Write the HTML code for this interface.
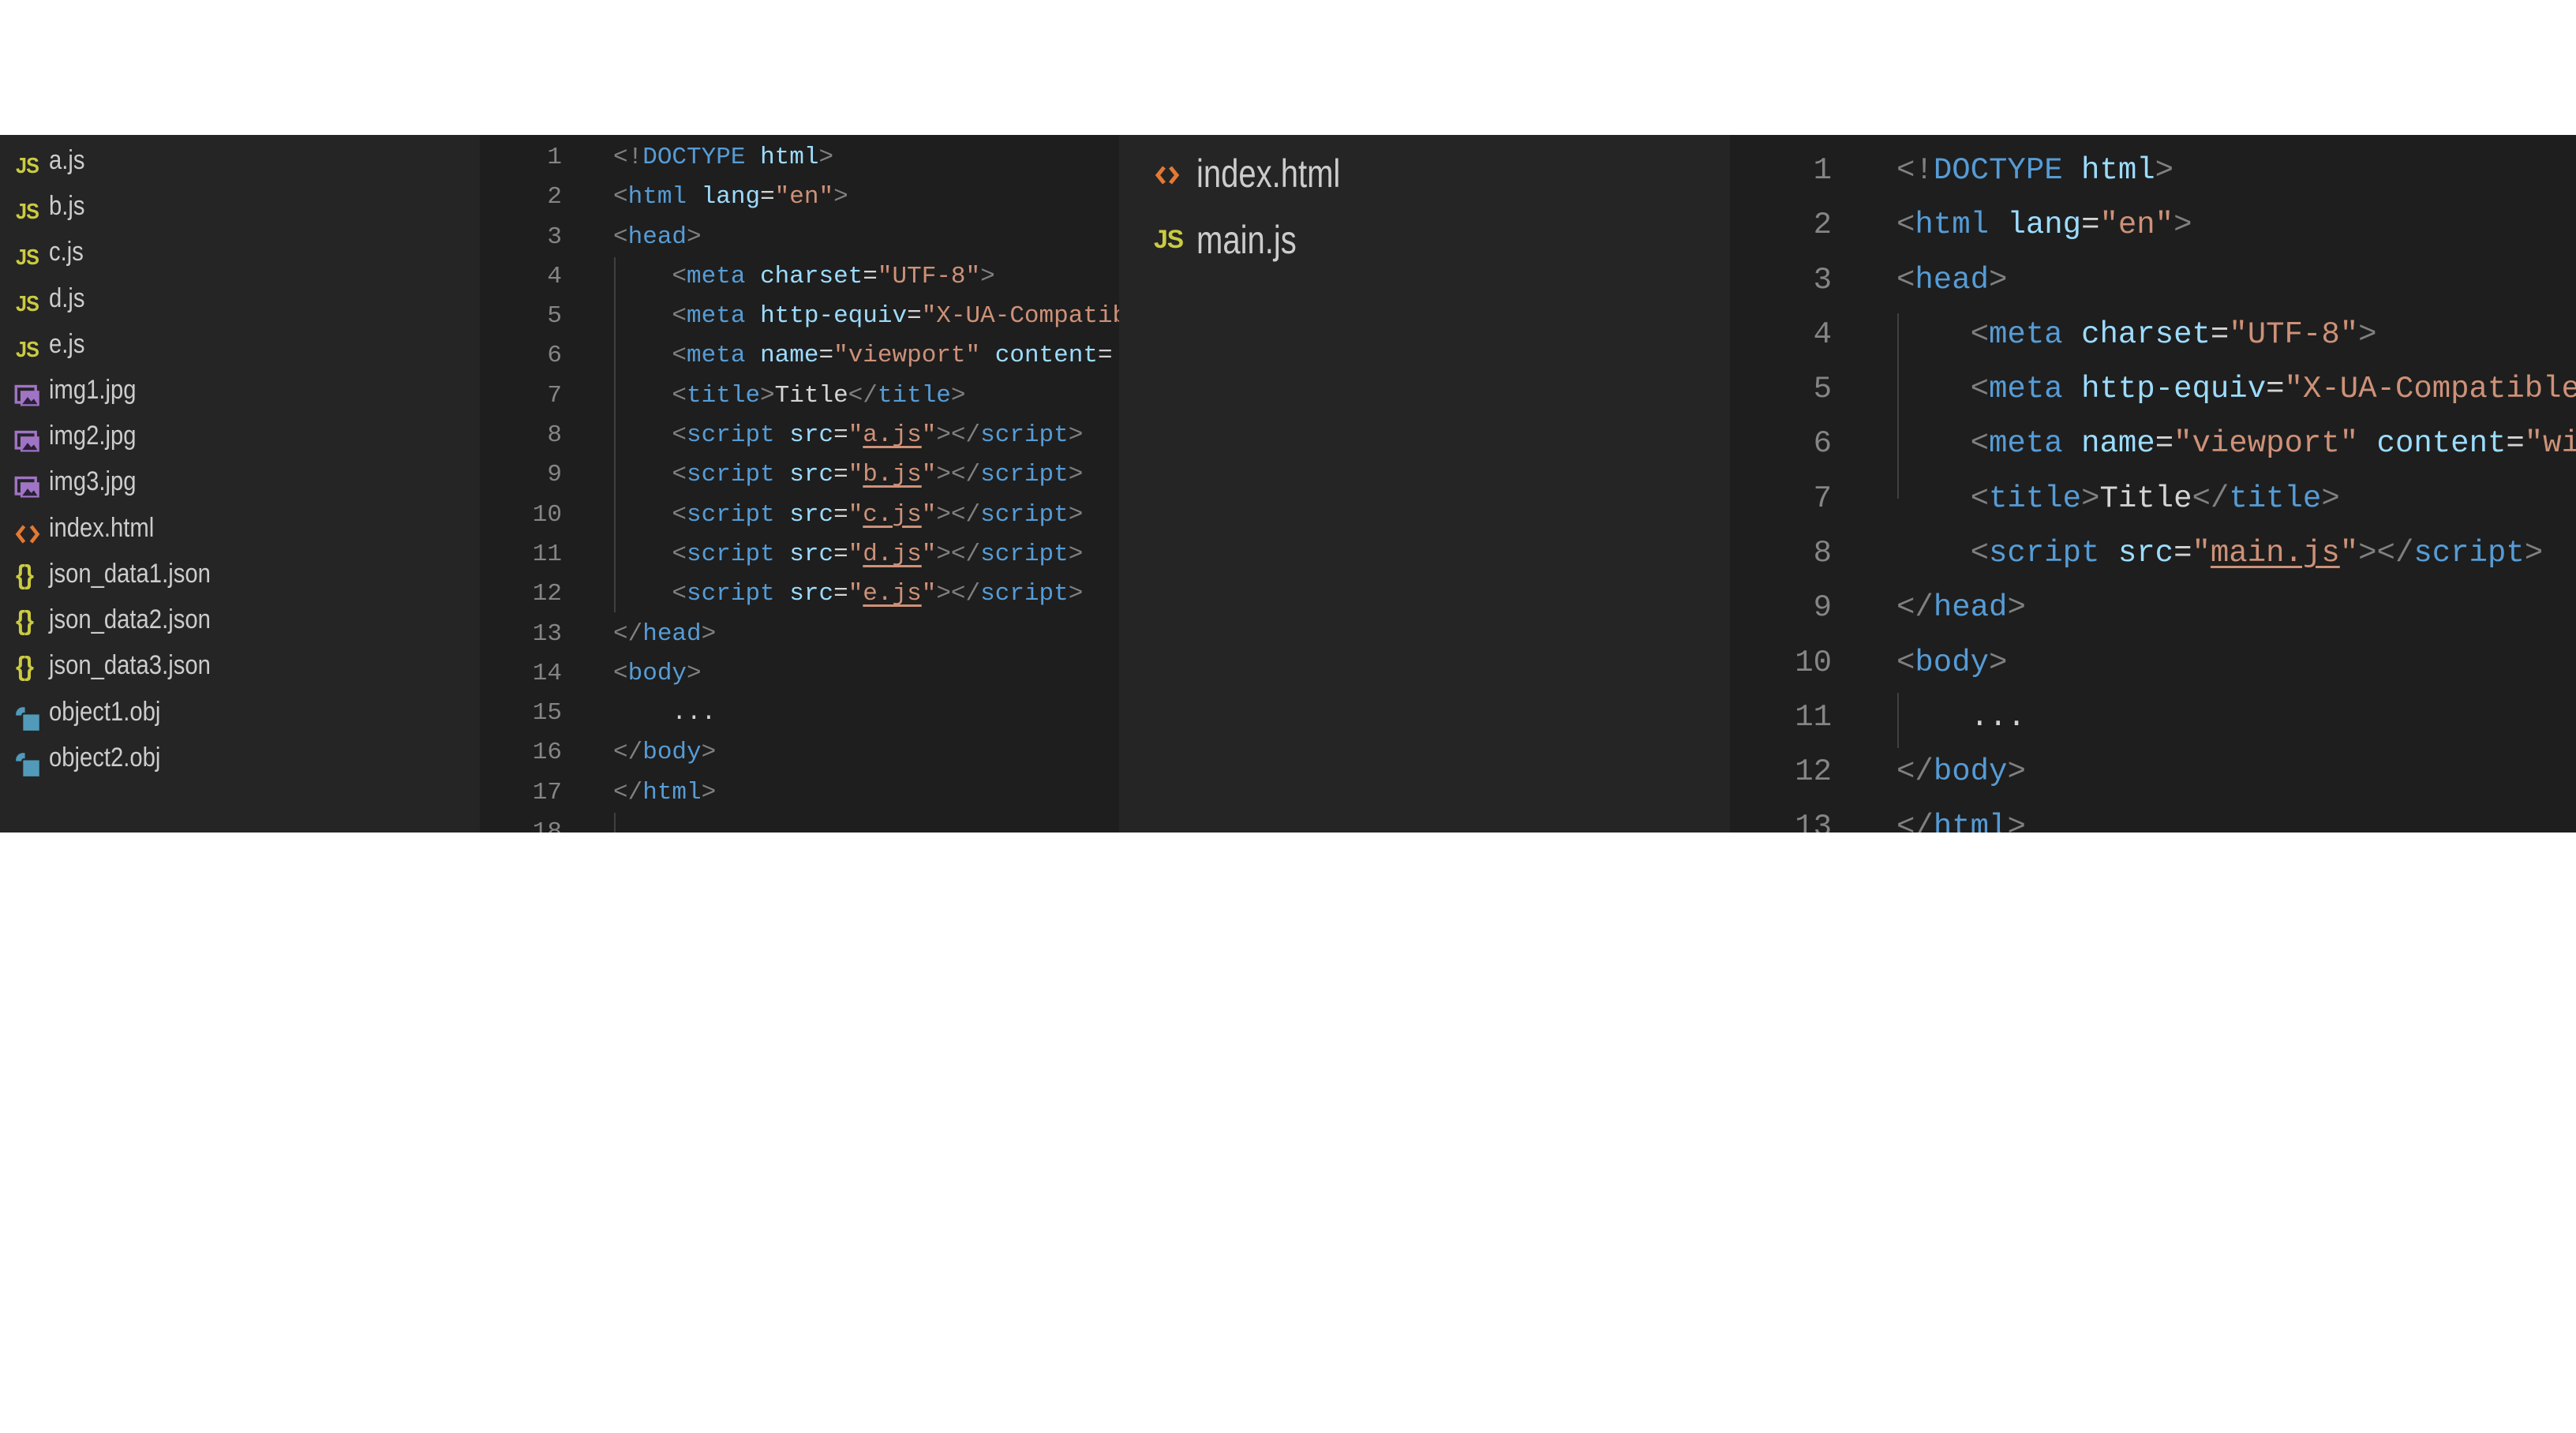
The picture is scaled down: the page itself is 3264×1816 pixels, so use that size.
<!DOCTYPE html>
<html><head><meta charset="utf-8">
<style>
html,body{margin:0;padding:0;background:#fff;width:3264px;height:1816px;overflow:hidden}
.band{position:absolute;left:0;top:171px;width:3264px;height:884px;background:#1e1e1e;overflow:hidden}
.side{position:absolute;left:0;top:0;width:608px;height:884px;background:#252526}
.mid{position:absolute;left:1418px;top:0;width:774px;height:884px;background:#252526}
.row{position:absolute;left:0;height:58px;width:600px}
.row .n{position:absolute;left:62px;top:6px;font:34px "Liberation Sans",sans-serif;color:#cccccc;transform:scaleX(.86);transform-origin:left;white-space:nowrap}
.ic{position:absolute;left:18px;top:16px;width:34px;height:34px}
.js{font:bold 28px "Liberation Sans",sans-serif;color:#cbcb41;position:absolute;left:20px;top:16px;letter-spacing:-1px;transform:scaleX(.9);transform-origin:left}
.code{position:absolute;font-family:"Liberation Mono",monospace;white-space:pre;color:#d4d4d4}
.ln{position:absolute;font-family:"Liberation Mono",monospace;color:#858585;text-align:right;white-space:pre}
.b{color:#808080}.t{color:#569cd6}.a{color:#9cdcfe}.s{color:#ce9178}.w{color:#d4d4d4}
.u{text-decoration:underline;text-decoration-color:#ce9178;text-underline-offset:6px;text-decoration-thickness:3px}
.g{position:absolute;width:2px;background:#404040}
</style></head><body>
<div class="band">
 <div class="side">
  <div class="row" style="top:7px"><span class="js">JS</span><span class="n">a.js</span></div>
  <div class="row" style="top:65px"><span class="js">JS</span><span class="n">b.js</span></div>
  <div class="row" style="top:123px"><span class="js">JS</span><span class="n">c.js</span></div>
  <div class="row" style="top:182px"><span class="js">JS</span><span class="n">d.js</span></div>
  <div class="row" style="top:240px"><span class="js">JS</span><span class="n">e.js</span></div>
  <div class="row" style="top:298px"><svg class="ic" viewBox="0 0 30 30"><rect x="2" y="4" width="22" height="18" fill="none" stroke="#a074c4" stroke-width="3"/><rect x="7" y="9" width="21" height="17" fill="#a074c4"/><path d="M9 24 L15 16 L19 21 L22 18 L26 24Z" fill="#2b1f3a"/></svg><span class="n">img1.jpg</span></div>
  <div class="row" style="top:356px"><svg class="ic" viewBox="0 0 30 30"><rect x="2" y="4" width="22" height="18" fill="none" stroke="#a074c4" stroke-width="3"/><rect x="7" y="9" width="21" height="17" fill="#a074c4"/><path d="M9 24 L15 16 L19 21 L22 18 L26 24Z" fill="#2b1f3a"/></svg><span class="n">img2.jpg</span></div>
  <div class="row" style="top:414px"><svg class="ic" viewBox="0 0 30 30"><rect x="2" y="4" width="22" height="18" fill="none" stroke="#a074c4" stroke-width="3"/><rect x="7" y="9" width="21" height="17" fill="#a074c4"/><path d="M9 24 L15 16 L19 21 L22 18 L26 24Z" fill="#2b1f3a"/></svg><span class="n">img3.jpg</span></div>
  <div class="row" style="top:473px"><svg class="ic" viewBox="0 0 30 30"><path d="M11 6 L4 15 L11 24 M19 6 L26 15 L19 24" fill="none" stroke="#e37933" stroke-width="4"/></svg><span class="n">index.html</span></div>
  <div class="row" style="top:531px"><span class="js" style="font-size:34px;top:8px">{}</span><span class="n">json_data1.json</span></div>
  <div class="row" style="top:589px"><span class="js" style="font-size:34px;top:8px">{}</span><span class="n">json_data2.json</span></div>
  <div class="row" style="top:647px"><span class="js" style="font-size:34px;top:8px">{}</span><span class="n">json_data3.json</span></div>
  <div class="row" style="top:706px"><svg class="ic" viewBox="0 0 30 30"><path d="M2 12 A8 8 0 0 1 12 3 L12 9 A3 3 0 0 0 8 12Z" fill="#519aba"/><rect x="10" y="11" width="18" height="18" fill="#519aba"/></svg><span class="n">object1.obj</span></div>
  <div class="row" style="top:764px"><svg class="ic" viewBox="0 0 30 30"><path d="M2 12 A8 8 0 0 1 12 3 L12 9 A3 3 0 0 0 8 12Z" fill="#519aba"/><rect x="10" y="11" width="18" height="18" fill="#519aba"/></svg><span class="n">object2.obj</span></div>
 </div>

 <div class="ln" style="left:600px;top:4px;width:112px;font-size:31px;line-height:50.3px">1
2
3
4
5
6
7
8
9
10
11
12
13
14
15
16
17
18</div>
 <div class="g" style="left:778px;top:155px;height:450px"></div>
 <div class="g" style="left:778px;top:859px;height:50px"></div>
 <div class="code" style="left:777px;top:4px;width:641px;overflow:hidden;font-size:31px;line-height:50.3px"><span class="b">&lt;!</span><span class="t">DOCTYPE</span> <span class="a">html</span><span class="b">&gt;</span>
<span class="b">&lt;</span><span class="t">html</span> <span class="a">lang</span>=<span class="s">"en"</span><span class="b">&gt;</span>
<span class="b">&lt;</span><span class="t">head</span><span class="b">&gt;</span>
    <span class="b">&lt;</span><span class="t">meta</span> <span class="a">charset</span>=<span class="s">"UTF-8"</span><span class="b">&gt;</span>
    <span class="b">&lt;</span><span class="t">meta</span> <span class="a">http-equiv</span>=<span class="s">"X-UA-Compatible"</span>
    <span class="b">&lt;</span><span class="t">meta</span> <span class="a">name</span>=<span class="s">"viewport"</span> <span class="a">content</span>=
    <span class="b">&lt;</span><span class="t">title</span><span class="b">&gt;</span>Title<span class="b">&lt;/</span><span class="t">title</span><span class="b">&gt;</span>
    <span class="b">&lt;</span><span class="t">script</span> <span class="a">src</span>=<span class="s">"<span class="u">a.js</span>"</span><span class="b">&gt;&lt;/</span><span class="t">script</span><span class="b">&gt;</span>
    <span class="b">&lt;</span><span class="t">script</span> <span class="a">src</span>=<span class="s">"<span class="u">b.js</span>"</span><span class="b">&gt;&lt;/</span><span class="t">script</span><span class="b">&gt;</span>
    <span class="b">&lt;</span><span class="t">script</span> <span class="a">src</span>=<span class="s">"<span class="u">c.js</span>"</span><span class="b">&gt;&lt;/</span><span class="t">script</span><span class="b">&gt;</span>
    <span class="b">&lt;</span><span class="t">script</span> <span class="a">src</span>=<span class="s">"<span class="u">d.js</span>"</span><span class="b">&gt;&lt;/</span><span class="t">script</span><span class="b">&gt;</span>
    <span class="b">&lt;</span><span class="t">script</span> <span class="a">src</span>=<span class="s">"<span class="u">e.js</span>"</span><span class="b">&gt;&lt;/</span><span class="t">script</span><span class="b">&gt;</span>
<span class="b">&lt;/</span><span class="t">head</span><span class="b">&gt;</span>
<span class="b">&lt;</span><span class="t">body</span><span class="b">&gt;</span>
    ...
<span class="b">&lt;/</span><span class="t">body</span><span class="b">&gt;</span>
<span class="b">&lt;/</span><span class="t">html</span><span class="b">&gt;</span>
</div>

 <div class="mid">
  <svg style="position:absolute;left:44px;top:35px" width="34" height="32" viewBox="0 0 34 32"><path d="M13 6 L5 16 L13 26 M21 6 L29 16 L21 26" fill="none" stroke="#e37933" stroke-width="5"/></svg>
  <span style="position:absolute;left:98px;top:20px;font:50px 'Liberation Sans',sans-serif;color:#cccccc;transform:scaleX(.8);transform-origin:left;white-space:nowrap">index.html</span>
  <span style="position:absolute;left:44px;top:114px;font:bold 32px 'Liberation Sans',sans-serif;color:#cbcb41;letter-spacing:-1px">JS</span>
  <span style="position:absolute;left:98px;top:104px;font:50px 'Liberation Sans',sans-serif;color:#cccccc;transform:scaleX(.8);transform-origin:left;white-space:nowrap">main.js</span>
 </div>

 <div class="ln" style="left:2200px;top:11px;width:121px;font-size:39px;line-height:69.3px">1
2
3
4
5
6
7
8
9
10
11
12
13</div>
 <div class="g" style="left:2404px;top:226px;height:235px"></div>
 <div class="g" style="left:2404px;top:707px;height:70px"></div>
 <div class="code" style="left:2403px;top:11px;width:861px;overflow:hidden;font-size:39px;line-height:69.3px"><span class="b">&lt;!</span><span class="t">DOCTYPE</span> <span class="a">html</span><span class="b">&gt;</span>
<span class="b">&lt;</span><span class="t">html</span> <span class="a">lang</span>=<span class="s">"en"</span><span class="b">&gt;</span>
<span class="b">&lt;</span><span class="t">head</span><span class="b">&gt;</span>
    <span class="b">&lt;</span><span class="t">meta</span> <span class="a">charset</span>=<span class="s">"UTF-8"</span><span class="b">&gt;</span>
    <span class="b">&lt;</span><span class="t">meta</span> <span class="a">http-equiv</span>=<span class="s">"X-UA-Compatible"</span>
    <span class="b">&lt;</span><span class="t">meta</span> <span class="a">name</span>=<span class="s">"viewport"</span> <span class="a">content</span>=<span class="s">"width</span>
    <span class="b">&lt;</span><span class="t">title</span><span class="b">&gt;</span>Title<span class="b">&lt;/</span><span class="t">title</span><span class="b">&gt;</span>
    <span class="b">&lt;</span><span class="t">script</span> <span class="a">src</span>=<span class="s">"<span class="u">main.js</span>"</span><span class="b">&gt;&lt;/</span><span class="t">script</span><span class="b">&gt;</span>
<span class="b">&lt;/</span><span class="t">head</span><span class="b">&gt;</span>
<span class="b">&lt;</span><span class="t">body</span><span class="b">&gt;</span>
    ...
<span class="b">&lt;/</span><span class="t">body</span><span class="b">&gt;</span>
<span class="b">&lt;/</span><span class="t">html</span><span class="b">&gt;</span></div>
</div>
</body></html>
